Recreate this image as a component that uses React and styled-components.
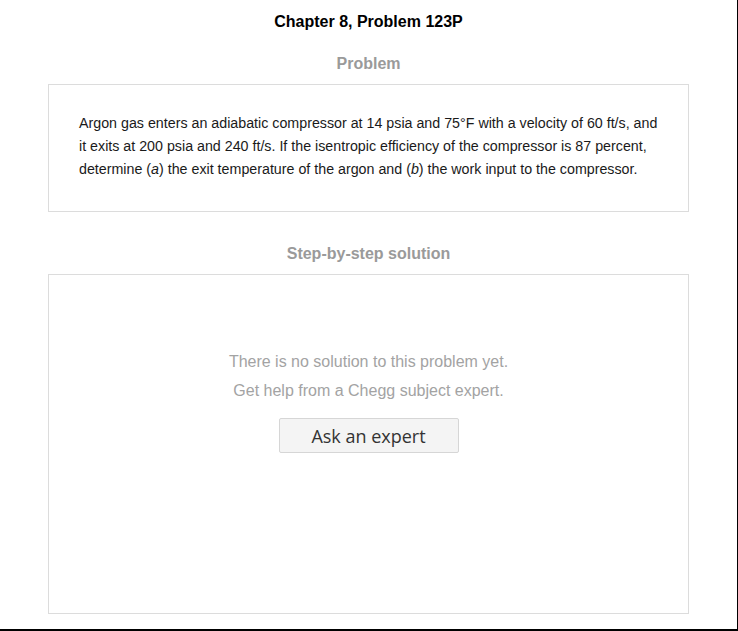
import styled, { createGlobalStyle } from 'styled-components';

const GlobalStyle = createGlobalStyle`
  html, body {
    margin: 0;
    padding: 0;
    background: #ffffff;
  }
  body {
    font-family: "Liberation Sans", Arial, sans-serif;
  }
`;

function App() {
  return (
    <>
      <GlobalStyle />
      <Page>
        <Title>Chapter 8, Problem 123P</Title>

        <SectionHeading>Problem</SectionHeading>
        <ProblemBox>
          <ProblemText>
            Argon gas enters an adiabatic compressor at 14 psia and 75°F with a velocity of 60 ft/s, and<br />
            it exits at 200 psia and 240 ft/s. If the isentropic efficiency of the compressor is 87 percent,<br />
            determine (<i>a</i>) the exit temperature of the argon and (<i>b</i>) the work input to the compressor.
          </ProblemText>
        </ProblemBox>

        <SectionHeading $spaced>Step-by-step solution</SectionHeading>
        <SolutionBox>
          <EmptyLine>There is no solution to this problem yet.</EmptyLine>
          <EmptyLine>Get help from a Chegg subject expert.</EmptyLine>
          <AskButton type="button">Ask an expert</AskButton>
        </SolutionBox>
      </Page>
    </>
  );
}

export default App;

const Page = styled.div`
  box-sizing: border-box;
  width: 738px;
  height: 631px;
  border-right: 1px solid #000000;
  border-bottom: 2px solid #000000;
  padding: 12px 48px 0;
  display: flex;
  flex-direction: column;
  align-items: stretch;
`;

const Title = styled.h1`
  margin: 0;
  font-size: 16px;
  line-height: 20px;
  font-weight: 700;
  color: #000000;
  text-align: center;
`;

const SectionHeading = styled.h2`
  margin: ${(p) => (p.$spaced ? '32px' : '22px')} 0 10px;
  font-size: 16px;
  line-height: 20px;
  font-weight: 700;
  color: #9a9a9a;
  text-align: center;
`;

const ProblemBox = styled.div`
  box-sizing: border-box;
  height: 128px;
  border: 1px solid #dcdcdc;
  padding: 27px 10px 0 30px;
`;

const ProblemText = styled.p`
  margin: 0;
  font-size: 14.25px;
  line-height: 23px;
  color: #1a1a1a;
  white-space: nowrap;
`;

const SolutionBox = styled.div`
  box-sizing: border-box;
  height: 340px;
  border: 1px solid #dcdcdc;
  padding-top: 72px;
  display: flex;
  flex-direction: column;
  align-items: center;
`;

const EmptyLine = styled.p`
  margin: 0;
  font-size: 16px;
  line-height: 29px;
  color: #a3a3a3;
`;

const AskButton = styled.button`
  box-sizing: border-box;
  margin-top: 13px;
  width: 180px;
  height: 35px;
  border: 1px solid #d6d6d6;
  border-radius: 2px;
  background: #f4f4f4;
  color: #333333;
  font-family: "Open Sans", "Segoe UI", sans-serif;
  font-size: 18px;
  padding: 0;
  cursor: pointer;
`;
